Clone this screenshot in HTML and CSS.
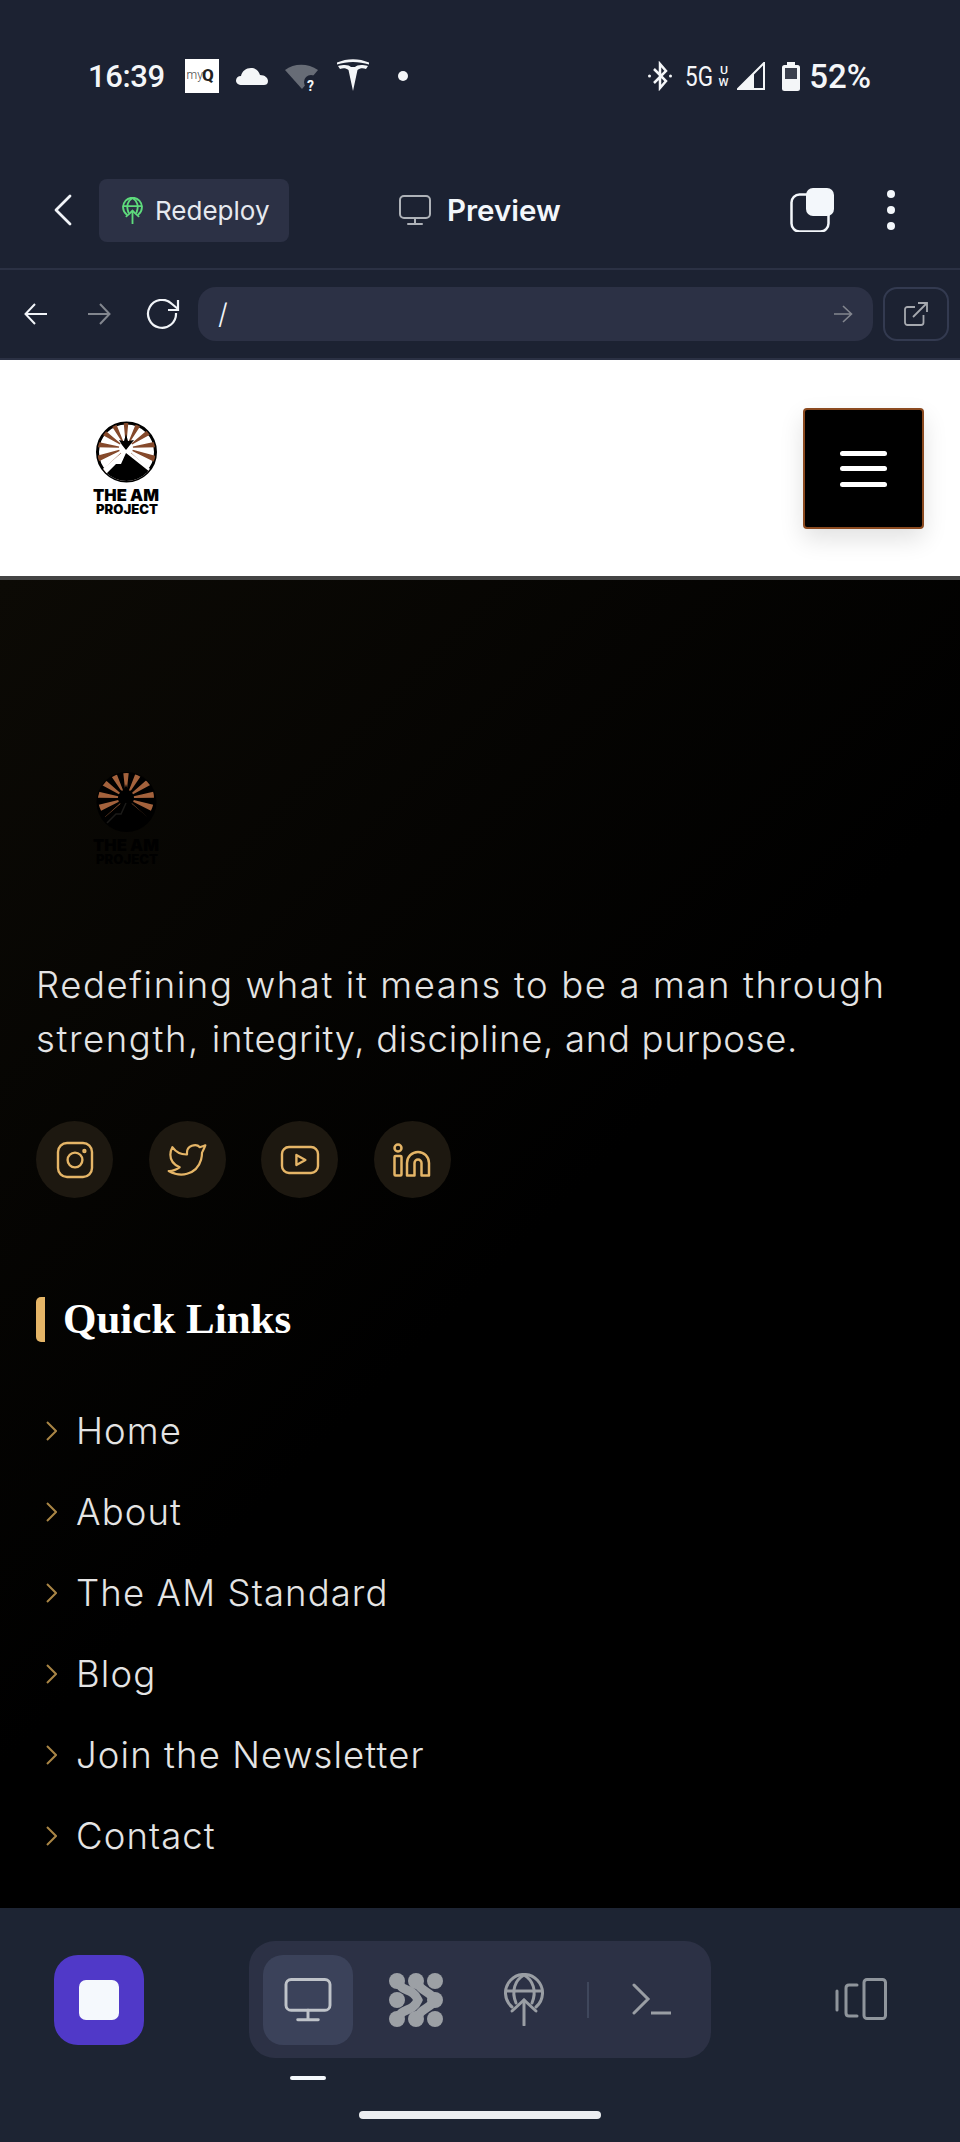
FILE: index.html
```html
<!DOCTYPE html>
<html lang="en">
<head>
<meta charset="utf-8">
<title>The AM Project – Preview</title>
<link rel="stylesheet" href="styles.css">
</head>
<body>
<div class="app">
  <div class="status">
    <span class="time">16:39</span>
    <svg class="i-myq" viewBox="0 0 34 34"><rect width="34" height="34" fill="#fff"/><text x="1.500" y="20" class="myq-my">my</text><text x="17" y="22" class="myq-q">Q</text></svg>
    <svg class="i-cloud" viewBox="0 0 32 17"><path d="M6 17C2 17 0 15 0 12.500C0 10 2 8 5 8C6 3 10 0 15 0C20 0 23 3 24 7C29 7 32 10 32 13C32 16 30 17 28 17Z" fill="#f4f6f8"/></svg>
    <svg class="i-wifi" viewBox="0 0 34 36"><path d="M17 29L0 10C9 3 23 3 33 10Z" fill="#676c76"/><circle cx="26" cy="22" r="7" fill="#1c2232"/><text x="22" y="31" class="wifi-q">?</text></svg>
    <svg class="i-tesla" viewBox="0 0 32 32"><path d="M0 3.500C10 -1 22 -1 32 3.500L32 5.500C22 2 10 2 0 5.500Z" fill="#f4f6f8"/><path d="M1 7C8 5 12 6 14 8L18 8C20 6 24 5 31 7L29 10C26 9 23 9 20.500 11L16 32L11.500 11C9 9 6 9 3 10Z" fill="#f4f6f8"/></svg>
    <span class="dot"></span>
    <span class="spacer"></span>
    <svg class="i-bt" viewBox="0 0 24 30"><path d="M6 8L18 20L12 27V3L18 10L6 22" fill="none" stroke="#f4f6f8" stroke-width="2.500"/><circle cx="1.500" cy="15" r="1.500" fill="#f4f6f8"/><circle cx="22.500" cy="15" r="1.500" fill="#f4f6f8"/></svg>
    <svg class="i-5g" viewBox="0 0 44 34"><text x="0" y="25" textLength="28" lengthAdjust="spacingAndGlyphs" class="net-5g">5G</text><text x="35" y="13" textLength="8" lengthAdjust="spacingAndGlyphs" class="net-uw">U</text><text x="33.500" y="25" textLength="10" lengthAdjust="spacingAndGlyphs" class="net-uw">W</text></svg>
    <svg class="i-signal" viewBox="0 0 28 28"><path d="M27 1V27H1Z" fill="none" stroke="#f4f6f8" stroke-width="2"/><path d="M0 28L17 11V28Z" fill="#f4f6f8"/></svg>
    <svg class="i-batt" viewBox="0 0 18 29"><rect x="5" width="8" height="4" fill="#f4f6f8"/><rect y="3" width="18" height="26" rx="2.500" fill="#f4f6f8"/><rect x="3" y="6" width="12" height="11" fill="#3a3f4d"/></svg>
    <span class="batt">52%</span>
  </div>

  <div class="topbar">
    <svg class="i-back" viewBox="0 0 18 32"><path d="M16 2L2 16L16 30" fill="none" stroke="#f1f4f8" stroke-width="2.800" stroke-linecap="round" stroke-linejoin="round"/></svg>
    <div class="chip">
      <svg class="i-globe-green" viewBox="0 0 40 53"><g fill="none" stroke="#5edb7c" stroke-width="3.600" stroke-linecap="round"><path d="M8 34A18.500 18.500 0 1 1 32 34"/><path d="M12 30C7 18 11 7 20 2C29 7 33 18 28 30"/><path d="M2 18H38"/><path d="M20 52V27"/><path d="M8 38L20 27L32 38"/></g></svg>
      <span class="chip-label">Redeploy</span>
    </div>
    <div class="title">
      <svg class="i-monitor" viewBox="0 0 32 30"><g fill="none" stroke="#aeb2b8" stroke-width="2" stroke-linecap="round"><rect x="1" y="1" width="30" height="22" rx="4"/><path d="M16 23V29"/><path d="M9 29H23"/></g></svg>
      <span class="title-label">Preview</span>
    </div>
    <svg class="i-dup" viewBox="0 0 44 44"><rect x="1.500" y="6.500" width="37" height="37" rx="8" fill="none" stroke="#f3f7fb" stroke-width="2.500"/><rect x="16" y="0" width="28" height="28" rx="7" fill="#f3f7fb"/></svg>
    <div class="kebab"><span></span><span></span><span></span></div>
  </div>

  <div class="navbar">
    <svg class="i-arrow" viewBox="0 0 24 24"><path d="M23 12H2M11 2L1.500 12L11 22" fill="none" stroke="#f1f4f8" stroke-width="2"/></svg>
    <svg class="i-arrow i-arrow-fwd" viewBox="0 0 24 24"><path d="M1 12H22M13 2L22.500 12L13 22" fill="none" stroke="#82868e" stroke-width="2"/></svg>
    <svg class="i-reload" viewBox="0 0 34 30"><g fill="none" stroke="#f1f4f8" stroke-width="2.200"><path d="M30 14A14 14 0 1 1 26 5L32 10"/><path d="M32 1V11H22"/></g></svg>
    <div class="url">
      <span class="url-text">/</span>
      <svg class="i-go" viewBox="0 0 20 20"><path d="M1 10H18M10 2L18.500 10L10 18" fill="none" stroke="#83868f" stroke-width="1.600"/></svg>
    </div>
    <div class="open">
      <svg class="i-open" viewBox="0 0 24 24"><g fill="none" stroke="#a6a9af" stroke-width="1.800"><path d="M11 5H3.500A2.500 2.500 0 0 0 1 7.500V20.500A2.500 2.500 0 0 0 3.500 23H17A2.500 2.500 0 0 0 19.500 20.500V13"/><path d="M9 15L23 1"/><path d="M14 1H23V10"/></g></svg>
    </div>
  </div>

  <header class="site-header">
    <svg class="logo" viewBox="0 0 70 96">
      <defs><clipPath id="clip-a"><circle cx="33.500" cy="31" r="29"/></clipPath></defs>
      <circle cx="33.500" cy="31" r="29" fill="#fff" stroke="#000" stroke-width="3"/>
      <g clip-path="url(#clip-a)">
        <circle class="rays" cx="33" cy="27" r="20" pathLength="360" stroke-dasharray="11 16.690" stroke-dashoffset="-15.300" fill="none" stroke="#85492b" stroke-width="26"/>
        <path d="M33 28L62 52V62H4V53Z" fill="#fff"/>
        <path d="M33 32L62 55V62H4V55L14 52L23 43L28 43L33 32Z" fill="#000"/>
        <path d="M29 24L26 19L31 20L33 13L35 20L41 19L37 24L33 29Z" fill="#000"/>
      </g>
      <text x="0" y="80" textLength="66" lengthAdjust="spacingAndGlyphs" class="logo-t1">THE AM</text>
      <text x="3" y="93" textLength="62" lengthAdjust="spacingAndGlyphs" class="logo-t2">PROJECT</text>
    </svg>
    <button class="menu" type="button" aria-label="Menu"><span></span><span></span><span></span></button>
  </header>

  <footer class="site-footer">
    <svg class="logo logo-dim" viewBox="0 0 70 96">
      <defs><clipPath id="clip-b"><circle cx="33.500" cy="31" r="29"/></clipPath></defs>
      <circle cx="33.500" cy="31" r="30" fill="#000"/>
      <g clip-path="url(#clip-b)">
        <circle class="rays" cx="33" cy="27" r="18" pathLength="360" stroke-dasharray="13 14.690" stroke-dashoffset="-14.300" fill="none" stroke="#a4623c" stroke-width="20"/>
        <path d="M33 28L62 52V62H4V53Z" fill="#000"/>
        <path d="M14 52L23 43L28 43L33 32" fill="none" stroke="#1b1a18" stroke-width="1.500"/>
        <path d="M29 24L26 19L31 20L33 13L35 20L41 19L37 24L33 29Z" fill="#000"/>
      </g>
      <text x="0" y="80" textLength="66" lengthAdjust="spacingAndGlyphs" class="logo-t1">THE AM</text>
      <text x="3" y="93" textLength="62" lengthAdjust="spacingAndGlyphs" class="logo-t2">PROJECT</text>
    </svg>
    <p class="tagline">Redefining what it means to be a man through strength, <span class="tag-narrow">integrity, discipline, and purpose.</span></p>
    <div class="socials">
      <a class="social"><svg class="soc-ico" viewBox="0 0 24 24"><rect x="3.500" y="3.500" width="17" height="17" rx="4.500"/><circle cx="12" cy="12" r="3.700"/><circle cx="16.700" cy="7.500" r=".5"/></svg></a>
      <a class="social"><svg class="soc-ico soc-tw" viewBox="0 0 24 24"><path d="M22 4.010c-1 .49-1.980.689-3 .99c-1.121-1.265-2.783-1.335-4.380-.737s-2.643 2.060-2.620 3.737v1c-3.245.083-6.135-1.395-8-4c0 0-4.182 7.433 4 11c-1.872 1.247-3.739 2.088-6 2c3.308 1.803 6.913 2.423 10.034 1.517c3.580-1.040 6.522-3.723 7.651-7.742a13.840 13.840 0 0 0 .497-3.753c0-.249 1.510-2.772 1.818-4.013z"/></svg></a>
      <a class="social"><svg class="soc-ico" viewBox="0 0 24 24"><rect x="3" y="5.500" width="18" height="13" rx="3.500"/><path d="M10.200 9.500L14.700 12L10.200 14.500Z"/></svg></a>
      <a class="social"><svg class="soc-ico soc-in" viewBox="0 0 38 34"><circle cx="5" cy="5" r="3.500"/><rect x="1.500" y="13" width="7" height="19.500" rx="1"/><path d="M14 32.500V20A11 11 0 0 1 36 20V32.500H28.500V20A3.500 3.500 0 0 0 21.500 20V32.500Z"/></svg></a>
    </div>
    <h3 class="links-title">Quick Links</h3>
    <ul class="links">
      <li class="link"><svg class="chev" viewBox="0 0 11 20"><path d="M1 1L10 10L1 19"/></svg><span>Home</span></li>
      <li class="link"><svg class="chev" viewBox="0 0 11 20"><path d="M1 1L10 10L1 19"/></svg><span>About</span></li>
      <li class="link"><svg class="chev" viewBox="0 0 11 20"><path d="M1 1L10 10L1 19"/></svg><span>The AM Standard</span></li>
      <li class="link"><svg class="chev" viewBox="0 0 11 20"><path d="M1 1L10 10L1 19"/></svg><span>Blog</span></li>
      <li class="link"><svg class="chev" viewBox="0 0 11 20"><path d="M1 1L10 10L1 19"/></svg><span>Join the Newsletter</span></li>
      <li class="link"><svg class="chev" viewBox="0 0 11 20"><path d="M1 1L10 10L1 19"/></svg><span>Contact</span></li>
    </ul>
  </footer>

  <div class="dock">
    <div class="dock-row">
      <button class="stop" type="button" aria-label="Stop"><span></span></button>
      <div class="tabs">
        <div class="tab tab-active">
          <svg class="i-monitor-lg" viewBox="0 0 32 30"><g fill="none" stroke="#bfc3c9" stroke-width="2" stroke-linecap="round"><rect x="1" y="1" width="30" height="21" rx="3.500"/><path d="M16 22V28"/><path d="M9 28.500H23"/></g></svg>
        </div>
        <div class="tab">
          <svg class="i-cluster" viewBox="0 0 54 54"><g fill="#9ca0a5"><circle cx="8" cy="8" r="8"/><circle cx="27" cy="8" r="8"/><circle cx="46" cy="8" r="8"/><circle cx="8" cy="27" r="8"/><circle cx="46" cy="27" r="8"/><circle cx="8" cy="46" r="8"/><circle cx="27" cy="46" r="8"/><circle cx="46" cy="46" r="8"/></g><g fill="none" stroke="#9ca0a5" stroke-width="9"><path d="M10 11C14 19 24 15 29 27C24 39 14 35 10 43"/><path d="M29 11C33 19 42 19 46 27C42 35 33 35 29 43"/></g></svg>
        </div>
        <div class="tab">
          <svg class="i-globe" viewBox="0 0 40 53"><g fill="none" stroke="#9a9ea4" stroke-width="3" stroke-linecap="round"><path d="M8 34A18.500 18.500 0 1 1 32 34"/><path d="M12 30C7 18 11 7 20 2C29 7 33 18 28 30"/><path d="M2 18H38"/><path d="M20 52V27"/><path d="M8 38L20 27L32 38"/></g></svg>
        </div>
        <span class="tab-sep"></span>
        <svg class="i-term" viewBox="0 0 40 34"><g fill="none" stroke="#9a9ea4" stroke-width="3" stroke-linecap="round"><path d="M2 2L16 16L2 30"/></g><path d="M19 30H39" stroke="#9a9ea4" stroke-width="3"/></svg>
      </div>
      <svg class="i-panes" viewBox="0 0 52 42"><g fill="none" stroke="#8f959c" stroke-width="3" stroke-linecap="round"><path d="M2 13V32"/><path d="M22 7H14C12 7 11 8 11 10V35C11 37 12 38 14 38H22"/><rect x="29" y="1.500" width="21.500" height="39" rx="3"/></g></svg>
    </div>
    <span class="dock-mark"></span>
    <span class="home-bar"></span>
  </div>
</div>
</body>
</html>
```

FILE: styles.css
```css
* { box-sizing: border-box; }
html, body { margin: 0; padding: 0; background: #1c2232; }
.app { width: 960px; height: 2142px; display: flex; flex-direction: column; overflow: hidden; font-family: "Inter", "Liberation Sans", sans-serif; }
svg { display: block; flex: none; }

/* status bar */
.status { height: 152px; flex: none; background: #1c2232; display: flex; align-items: center; padding: 0 89px; color: #f4f6f8; font-family: "Roboto", "Liberation Sans", sans-serif; }
.time { font-size: 31px; font-weight: 500; width: 74px; letter-spacing: -.4px; margin-left: -1px; margin-right: 1px; }
.i-myq { width: 34px; height: 34px; margin-left: 22px; }
.myq-my { font: 300 12px "Roboto", sans-serif; fill: #444; }
.myq-q { font: 800 17px "Roboto", sans-serif; fill: #222; }
.i-cloud { width: 32px; height: 17px; margin-left: 17px; }
.i-wifi { width: 34px; height: 36px; margin-left: 17px; margin-top: 3px; }
.wifi-q { font: 700 14px "Roboto", sans-serif; fill: #f4f6f8; }
.i-tesla { width: 32px; height: 32px; margin-left: 18px; margin-top: -3px; }
.dot { width: 10px; height: 10px; border-radius: 50%; background: #f4f6f8; margin-left: 29px; }
.spacer { flex: 1; }
.i-bt { width: 24px; height: 30px; }
.i-5g { width: 44px; height: 34px; margin-left: 13px; margin-top: 4px; }
.net-5g { font: 400 27px "Roboto", sans-serif; fill: #f4f6f8; }
.net-uw { font: 500 11px "Roboto", sans-serif; fill: #f4f6f8; }
.i-signal { width: 28px; height: 28px; margin-left: 8px; }
.i-batt { width: 18px; height: 29px; margin-left: 17px; }
.batt { font-size: 33px; font-weight: 500; margin-left: 9px; }

/* top bar */
.topbar { height: 118px; flex: none; background: #1c2232; border-bottom: 2px solid #2b3144; display: flex; align-items: center; padding-left: 54px; }
.i-back { width: 18px; height: 32px; }
.chip { width: 190px; height: 63px; margin-left: 27px; background: #2c3145; border-radius: 8px; display: flex; align-items: center; padding-left: 23px; }
.i-globe-green { width: 21px; height: 27px; }
.chip-label { font-size: 26px; color: #e6e9ef; margin-left: 12px; }
.title { display: flex; align-items: center; margin-left: 110px; width: 390px; }
.i-monitor { width: 32px; height: 30px; }
.title-label { font-size: 29.500px; font-weight: 600; color: #f3f7fb; margin-left: 16px; }
.i-dup { width: 44px; height: 44px; margin-left: 1px; }
.kebab { display: flex; flex-direction: column; gap: 8px; margin-left: 53px; }
.kebab span { width: 8px; height: 8px; border-radius: 50%; background: #f3f7fb; }

/* nav bar */
.navbar { height: 90px; flex: none; background: #1c2232; border-bottom: 2px solid #2b3144; display: flex; align-items: center; padding: 0 11px 0 24px; }
.i-arrow { width: 24px; height: 24px; }
.i-arrow-fwd { margin-left: 39px; }
.i-reload { width: 34px; height: 30px; margin-left: 35px; }
.url { width: 676px; height: 54px; margin-left: 18px; background: #2c3145; border-radius: 18px; display: flex; align-items: center; justify-content: space-between; padding: 0 20px; }
.url-text { font-size: 28px; font-weight: 300; color: #f1f4f8; }
.i-go { width: 20px; height: 20px; }
.open { width: 66px; height: 54px; margin-left: 10px; border: 2px solid #333a50; border-radius: 14px; display: flex; align-items: center; justify-content: center; }
.i-open { width: 24px; height: 24px; }

/* site header */
.site-header { height: 220px; flex: none; background: #fff; border-bottom: 4px solid #a8a8a8; border-image: linear-gradient(#b8b8b8 75%, #444 75%) 1; display: flex; justify-content: space-between; padding: 48px 36px 0 93px; }
.logo { width: 70px; height: 96px; margin-top: 13px; }
.logo-t1 { font: 900 16.500px "Inter", sans-serif; fill: #000; }
.logo-t2 { font: 900 12.500px "Inter", sans-serif; fill: #000; }
.menu { width: 121px; height: 121px; padding: 0; background: #000; border: 2px solid #8b4a20; border-radius: 4px; box-shadow: 0 10px 24px rgba(0,0,0,.12); display: flex; flex-direction: column; align-items: center; justify-content: center; gap: 10.500px; }
.menu span { width: 47px; height: 5px; border-radius: 3px; background: #fff; }

/* site footer */
.site-footer { height: 1328px; flex: none; background: linear-gradient(135deg, #0c0a05 0%, #000 52%); padding: 191px 36px 0; color: #e4e4e4; }
.logo-dim { margin: 0 0 0 57px; }
.tagline { margin: 91px 0 0; font-size: 36.500px; font-weight: 300; line-height: 54px; letter-spacing: 1.600px; width: 890px; }
.tag-narrow { letter-spacing: .7px; }
.socials { display: flex; gap: 35.670px; margin-top: 55px; }
.social { width: 77px; height: 77px; border-radius: 50%; background: #1d1810; display: flex; align-items: center; justify-content: center; }
.soc-ico { width: 48px; height: 48px; fill: none; stroke: #e5b567; stroke-width: 1.200; stroke-linejoin: round; stroke-linecap: round; }
.soc-tw { width: 44px; height: 44px; }
.soc-in { width: 38px; height: 34px; stroke-width: 2.500; }
.links-title { margin: 99px 0 0; height: 45px; border-left: 9px solid #e5b567; border-radius: 5px 0 0 5px; padding-left: 18px; font-family: "Liberation Serif", serif; font-weight: 700; font-size: 43px; line-height: 43px; color: #fff; }
.links { list-style: none; margin: 48px 0 0; padding: 0; }
.link { height: 81px; display: flex; align-items: center; font-size: 36.500px; font-weight: 300; letter-spacing: 1.100px; }
.chev { width: 11px; height: 20px; margin-left: 10px; margin-right: 19px; fill: none; stroke: #a98545; stroke-width: 2; }

/* dock */
.dock { flex: 1; background: #1d2433; display: flex; flex-direction: column; padding-top: 33px; }
.dock-row { display: flex; align-items: center; padding-left: 54px; }
.stop { width: 90px; height: 90px; padding: 0; border: 0; border-radius: 24px; background: #5039c8; display: flex; align-items: center; justify-content: center; }
.stop span { width: 40px; height: 40px; border-radius: 7px; background: #f5f9fd; }
.tabs { width: 462px; height: 117px; margin-left: 105px; background: #2c3145; border-radius: 26px; display: flex; align-items: center; padding-left: 14px; }
.tab { width: 90px; height: 90px; border-radius: 20px; display: flex; align-items: center; justify-content: center; margin-right: 18px; }
.tab-active { background: #3b425a; }
.i-monitor-lg { width: 48px; height: 44px; }
.i-cluster { width: 54px; height: 54px; }
.i-globe { width: 40px; height: 53px; }
.tab-sep { width: 2px; height: 36px; background: #3f475c; }
.i-term { width: 40px; height: 34px; margin-left: 43px; }
.i-panes { width: 52px; height: 42px; margin-left: 124px; margin-top: -2px; }
.dock-mark { width: 36px; height: 4px; border-radius: 2px; background: #f5f9fd; margin: 18px 0 0 290px; }
.home-bar { width: 242px; height: 8px; border-radius: 4px; background: #eceef1; margin: 31px 0 0 359px; }
```
